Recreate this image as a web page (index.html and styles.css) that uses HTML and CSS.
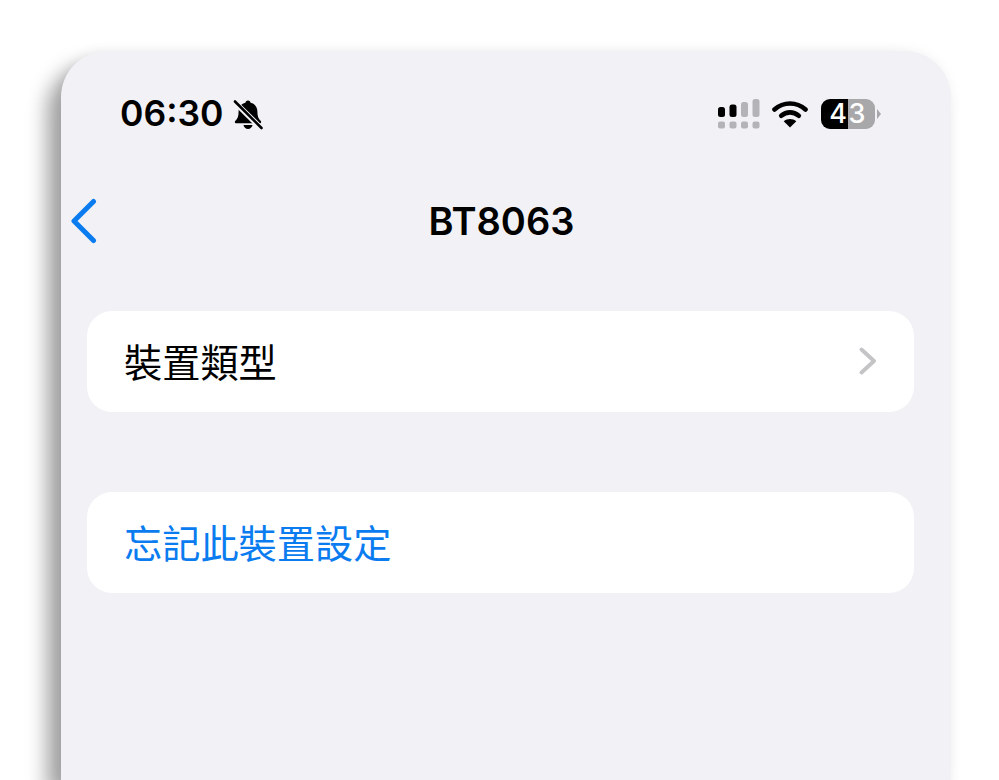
FILE: index.html
```html
<!DOCTYPE html>
<html lang="zh-Hant">
<head>
    <meta charset="UTF-8">
    <meta name="viewport" content="width=device-width, initial-scale=1.0">
    <title>BT8063</title>
    <link rel="stylesheet" href="styles.css">
</head>
<body>
    <div class="phone">
        <div class="status-bar">
            <div class="status-left">
                <span class="time">06:30</span>
                <svg class="bell" width="30" height="32" viewBox="0 0 30 32">
                    <path d="M15 1.500c1.500 0 2.500 1 2.600 2.300 4.400 1 6.800 4.400 6.800 9 0 4.600 1 6.800 3.400 9.300.8.900.2 2.200-1.100 2.200H3.300c-1.300 0-1.900-1.300-1.100-2.200 2.400-2.500 3.400-4.700 3.400-9.300 0-4.600 2.400-8 6.800-9 .1-1.300 1.100-2.300 2.600-2.300z" fill="#000"/>
                    <path d="M10.500 26h9c-.3 2.300-2.200 4-4.500 4s-4.200-1.700-4.500-4z" fill="#000"/>
                    <path d="M1 2.500l28 27.500" stroke="#f1f1f6" stroke-width="5.400"/>
                    <path d="M2 2.500l26.500 26.500" stroke="#000" stroke-width="2.600" stroke-linecap="round"/>
                </svg>
            </div>
            <div class="status-right">
                <svg class="signal" width="42" height="30" viewBox="0 0 42 30">
                    <rect x="0" y="8" width="7" height="10" rx="2.500" fill="#000"/>
                    <rect x="11.500" y="5.500" width="7" height="12.500" rx="2.500" fill="#000"/>
                    <rect x="23" y="3" width="7" height="15" rx="2.500" fill="#b4b4b8"/>
                    <rect x="34.500" y="0" width="7" height="18" rx="2.500" fill="#b4b4b8"/>
                    <rect x="0" y="22.500" width="7" height="7" rx="2" fill="#b4b4b8"/>
                    <rect x="11.500" y="22.500" width="7" height="7" rx="2" fill="#b4b4b8"/>
                    <rect x="23" y="22.500" width="7" height="7" rx="2" fill="#b4b4b8"/>
                    <rect x="34.500" y="22.500" width="7" height="7" rx="2" fill="#b4b4b8"/>
                </svg>
                <svg class="wifi" width="36" height="28" viewBox="0 0 36 28">
                    <path d="M2.500 9.500C11.500 1.500 24.500 1.500 33.500 9.500" fill="none" stroke="#000" stroke-width="4.600" stroke-linecap="round"/>
                    <path d="M9.200 15.800C14.500 11.200 21.500 11.200 26.800 15.800" fill="none" stroke="#000" stroke-width="4.600" stroke-linecap="round"/>
                    <path d="M18 27.500l-6.300-6.300c3.600-3 9-3 12.600 0z" fill="#000"/>
                </svg>
                <div class="battery">
                    <div class="battery-body"><span>43</span></div>
                    <div class="battery-tip"></div>
                </div>
            </div>
        </div>

        <div class="nav-bar">
            <svg class="back" width="28" height="46" viewBox="0 0 28 46">
                <path d="M24.500 3.500L5 23l19.500 19.500" fill="none" stroke="#0a7cf0" stroke-width="5" stroke-linecap="round" stroke-linejoin="round"/>
            </svg>
            <h1 class="nav-title">BT8063</h1>
        </div>

        <div class="group">
            <div class="row">
                <span>裝置類型</span>
                <svg class="chevron" width="18" height="28" viewBox="0 0 18 28">
                    <path d="M2.500 2.500L15 14 2.500 25.500" fill="none" stroke="#c4c4c7" stroke-width="3.800" stroke-linecap="round" stroke-linejoin="round"/>
                </svg>
            </div>
        </div>

        <div class="group">
            <div class="row row-link">忘記此裝置設定</div>
        </div>
    </div>
</body>
</html>
```

FILE: styles.css
```css
html, body {
    height: 100%;
}
body {
    margin: 0;
    padding: 51px 48px 0 61px;
    box-sizing: border-box;
    overflow: hidden;
    background: #fff;
    font-family: Inter, "Noto Sans CJK TC", sans-serif;
    color: #000;
}
.phone {
    box-sizing: border-box;
    height: 100%;
    padding: 0 37px 0 26px;
    background: #f1f1f6;
    border-radius: 46px 46px 0 0;
    box-shadow: -14px 14px 20px rgba(0, 0, 0, 0.37), 0 -1px 14px rgba(0, 0, 0, 0.04);
}
.status-bar {
    display: flex;
    justify-content: space-between;
    align-items: center;
    height: 34px;
    padding: 46px 32px 0 33px;
}
.status-left {
    display: flex;
    align-items: center;
    gap: 10px;
}
.time {
    font-size: 35.500px;
    font-weight: 600;
    line-height: 34px;
}
.bell {
    margin-top: 1px;
}
.status-right {
    display: flex;
    align-items: center;
}
.signal {
    margin-right: 12px;
}
.wifi {
    margin-right: 13px;
}
.battery {
    display: flex;
    align-items: center;
    gap: 2px;
    margin-right: 1px;
}
.battery-body {
    width: 54px;
    height: 30px;
    border-radius: 9px;
    background: linear-gradient(to right, #000 0 50%, #a8a8ab 50% 100%);
    color: #fff;
    font-size: 27px;
    font-weight: 500;
    letter-spacing: 1.500px;
    line-height: 30px;
    text-align: center;
}
.battery-tip {
    width: 0;
    height: 0;
    border-left: 4px solid #a8a8ab;
    border-top: 5px solid transparent;
    border-bottom: 5px solid transparent;
}
.nav-bar {
    position: relative;
    display: flex;
    align-items: center;
    justify-content: center;
    height: 60px;
    margin-top: 60px;
}
.back {
    position: absolute;
    left: -18px;
    top: 7px;
}
.nav-title {
    margin: 0 0 0 2px;
    font-size: 38px;
    font-weight: 600;
    line-height: 60px;
}
.group {
    margin-bottom: 80px;
}
.nav-bar + .group {
    margin-top: 60px;
}
.row {
    display: flex;
    align-items: center;
    justify-content: space-between;
    height: 101px;
    padding: 0 37px 2px 37px;
    box-sizing: border-box;
    background: #fff;
    border-radius: 25px;
    font-size: 38.200px;
    font-family: "Noto Sans CJK TC", sans-serif;
}
.row-link {
    color: #0a7cf0;
}
```
